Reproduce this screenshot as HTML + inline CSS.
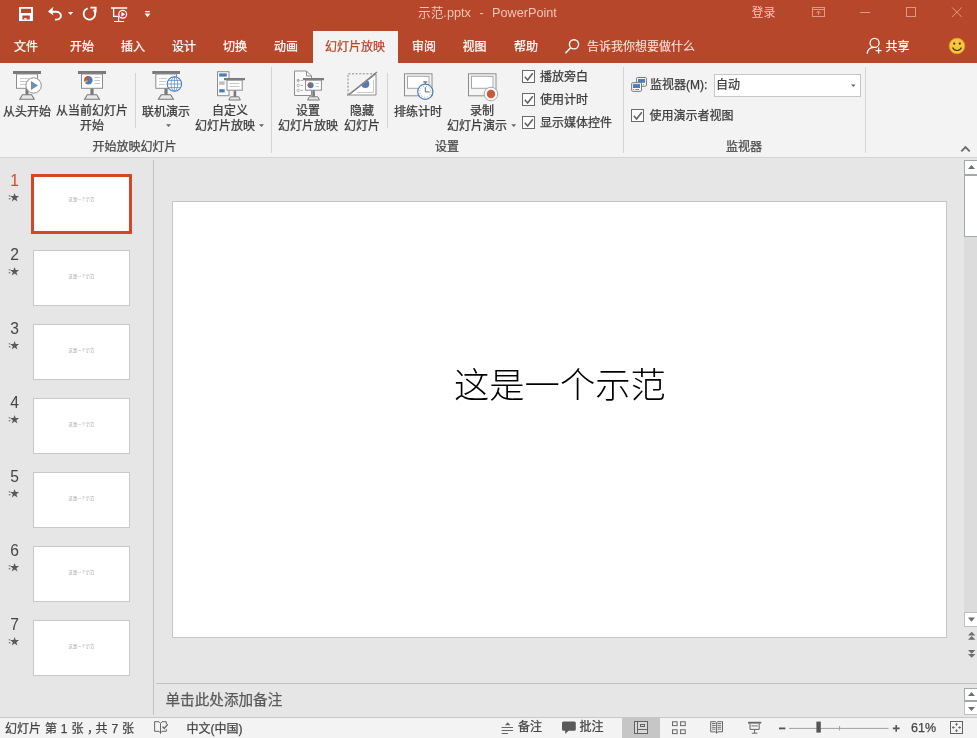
<!DOCTYPE html>
<html lang="zh-CN">
<head>
<meta charset="utf-8">
<title>示范.pptx - PowerPoint</title>
<style>
*{box-sizing:border-box;margin:0;padding:0}
html,body{width:977px;height:738px;overflow:hidden;background:#e6e6e6}
body{position:relative;font-family:"Liberation Sans","Noto Sans CJK SC",sans-serif;font-size:12px;color:#3a3a3a}
.abs{position:absolute}
svg{position:absolute;left:0;top:0;overflow:visible}
.t{position:absolute;white-space:nowrap;line-height:16px;-webkit-text-stroke:0.25px currentColor}
.c{text-align:center}
#titlebar{left:0;top:0;width:977px;height:63px;background:#b7472a}
#ribbon{left:0;top:63px;width:977px;height:95px;background:#f3f3f3;border-bottom:1px solid #d4d4d4}
.tab{color:#fff;font-size:12px;top:39px}
#activetab{left:313px;top:31px;width:85px;height:33px;background:#f3f3f3}
.sep{position:absolute;width:1px;background:#d4d4d4}
.glabel{color:#484848;top:139px}
.cb{position:absolute;width:13px;height:13px;border:1px solid #6a6a6a;background:#fdfdfd}
.cb svg{left:0;top:0}
#vdiv{left:153px;top:160px;width:1px;height:555px;background:#c0c0c0}
.thumb{position:absolute;left:33px;width:97px;height:56px;background:#fff;border:1px solid #c8c8c8}
.thumb.sel{left:31px;width:101px;height:60px;border:3px solid #d24726}
.num{position:absolute;left:10.3px;width:10px;font-size:15.6px;color:#444;line-height:16px}
.tt{position:absolute;left:0;right:0;top:50%;margin-top:-4.8px;text-align:center;font-size:4.3px;line-height:8px;color:#8a8a8a;font-weight:300}
.sel .tt{margin-top:-8.2px}
#slide{left:172px;top:201px;width:775px;height:437px;background:#fff;border:1px solid #c6c6c6}
#status{left:0;top:717px;width:977px;height:21px;background:#f3f3f3;border-top:1px solid #c8c8c8}
.st{color:#444;top:721px}
</style>
</head>
<body>
<div id="app" style="position:absolute;left:0;top:0;width:977px;height:738px;will-change:transform">
<div id="titlebar" class="abs"></div>
<div id="activetab" class="abs"></div>

<!-- title bar text -->
<div class="t" style="left:418px;top:5px;font-size:12.7px;color:#efc6b9;-webkit-text-stroke:0">示范.pptx</div>
<div class="t" style="left:479.5px;top:5px;font-size:12.7px;color:#efc6b9;-webkit-text-stroke:0">-</div>
<div class="t" style="left:492px;top:5px;font-size:12.7px;color:#efc6b9;-webkit-text-stroke:0">PowerPoint</div>
<div class="t" style="left:751.5px;top:4.5px;font-size:12px;color:#efc6b9;-webkit-text-stroke:0">登录</div>

<!-- tabs -->
<div class="t tab" style="left:14px">文件</div>
<div class="t tab" style="left:70px">开始</div>
<div class="t tab" style="left:121px">插入</div>
<div class="t tab" style="left:172px">设计</div>
<div class="t tab" style="left:223px">切换</div>
<div class="t tab" style="left:274px">动画</div>
<div class="t tab" style="left:325px;color:#b7472a">幻灯片放映</div>
<div class="t tab" style="left:412px">审阅</div>
<div class="t tab" style="left:462.5px">视图</div>
<div class="t tab" style="left:514px">帮助</div>
<div class="t tab" style="left:587px;color:#f9e2da;-webkit-text-stroke:0.1px">告诉我你想要做什么</div>
<div class="t tab" style="left:885.5px">共享</div>

<svg width="977" height="63" viewBox="0 0 977 63" fill="none" stroke="#fff" stroke-width="1.6">
  <!-- save -->
  <path fill-rule="evenodd" fill="#fff" stroke="none" d="M19 7 H33 V21 H19z M21 8.8 H31 V13 H21z M22.4 15.6 H29.8 V19.4 H22.4z"/>
  <rect x="24.3" y="18" width="2.2" height="1.6" fill="#fff" stroke="none"/>
  <!-- undo -->
  <path d="M49.6 11.8 H56 a4.9 3.9 0 0 1 0 7.8 H55" stroke-width="1.9"/>
  <path d="M53.4 6.8 L48 11.6 L53.4 15.4 L52.4 11.6z" fill="#fff" stroke="none"/>
  <path d="M68 12 h5.2 l-2.6 3.1z" fill="#fff" stroke="none"/>
  <!-- redo -->
  <path d="M87.6 8.3 A5.8 5.8 0 1 0 93.6 9.8" stroke-width="1.8"/>
  <path d="M90.4 7.6 H95.6 V12.6" stroke-width="1.9"/>
  <!-- slideshow from start -->
  <line x1="111" y1="8" x2="127.2" y2="8" stroke-width="1.5"/>
  <path d="M113.6 8 V16.4 H118.4" stroke-width="1.3"/>
  <path d="M118.6 16.6 V21.4 M114 21.5 H124.2" stroke-width="1.2"/>
  <circle cx="122.7" cy="14.3" r="3.9" stroke-width="1.2"/>
  <path d="M121.4 11.9 L125.2 14.3 L121.4 16.7z" fill="#fff" stroke="none"/>
  <!-- customize -->
  <rect x="145.2" y="11" width="4.6" height="1.2" fill="#fff" stroke="none"/>
  <path d="M144.6 13.6 h5.8 l-2.9 3.6z" fill="#fff" stroke="none"/>
  <!-- search -->
  <circle cx="574" cy="44.3" r="4.6" stroke-width="1.4"/>
  <line x1="570.6" y1="47.8" x2="565.4" y2="53.2" stroke-width="1.5"/>
  <!-- share -->
  <circle cx="874.6" cy="42.9" r="4.5" stroke-width="1.3"/>
  <path d="M867.2 53.6 C867.6 49.6 870.2 47.6 873.6 47.4" stroke-width="1.3"/>
  <path d="M875.6 50.6 H881.6 M878.6 47.6 V53.6" stroke-width="1.3"/>
  <!-- window controls -->
  <g stroke="#df9a86" stroke-width="1">
    <rect x="812.5" y="7.5" width="12" height="9"/>
    <line x1="812.5" y1="9.5" x2="824.5" y2="9.5"/>
    <path d="M818.5 15 V11.2 M816.5 13 L818.5 11 L820.5 13"/>
    <line x1="860" y1="12.5" x2="870" y2="12.5"/>
    <rect x="906.5" y="7.5" width="9" height="9"/>
    <path d="M952 7.3 L961.8 17.1 M961.8 7.3 L952 17.1"/>
  </g>
  <!-- smiley -->
  <circle cx="957" cy="46" r="7.8" fill="#f6c63c" stroke="#d9a520" stroke-width="0.8"/>
  <circle cx="954.2" cy="43.6" r="1.1" fill="#3a2a10" stroke="none"/>
  <circle cx="959.8" cy="43.6" r="1.1" fill="#3a2a10" stroke="none"/>
  <path d="M952.6 47.6 C954.4 51.4 959.6 51.4 961.4 47.6" stroke="#3a2a10" stroke-width="1.1"/>
</svg>
<div id="ribbon" class="abs"></div>

<!-- ribbon labels -->
<div class="t c" style="left:-3px;width:60px;top:104px">从头开始</div>
<div class="t c" style="left:52px;width:80px;top:104px;line-height:15px">从当前幻灯片<br>开始</div>
<div class="t c" style="left:136px;width:60px;top:104px">联机演示</div>
<div class="t c" style="left:190px;width:80px;top:104px;line-height:15px">自定义</div>
<div class="t" style="left:195px;top:119px;line-height:15px">幻灯片放映</div>
<div class="t c glabel" style="left:84.5px;width:100px">开始放映幻灯片</div>
<div class="sep" style="left:135px;top:73px;height:55px"></div>
<div class="sep" style="left:271px;top:67px;height:86px"></div>

<div class="t c" style="left:268px;width:80px;top:104px;line-height:15px">设置<br>幻灯片放映</div>
<div class="t c" style="left:337px;width:50px;top:104px;line-height:15px">隐藏<br>幻灯片</div>
<div class="sep" style="left:387px;top:73px;height:55px"></div>
<div class="t c" style="left:388px;width:60px;top:104px">排练计时</div>
<div class="t c" style="left:442px;width:80px;top:104px;line-height:15px">录制</div>
<div class="t" style="left:447px;top:119px;line-height:15px">幻灯片演示</div>
<div class="cb" style="left:522px;top:70px"></div>
<div class="cb" style="left:522px;top:93px"></div>
<div class="cb" style="left:522px;top:116px"></div>
<div class="t" style="left:540px;top:69px">播放旁白</div>
<div class="t" style="left:540px;top:92px">使用计时</div>
<div class="t" style="left:540px;top:115px">显示媒体控件</div>
<div class="t c glabel" style="left:417px;width:60px">设置</div>
<div class="sep" style="left:623px;top:67px;height:86px"></div>

<div class="t" style="left:650px;top:77px">监视器(M):</div>
<div class="abs" style="left:714px;top:74px;width:147px;height:23px;background:#fff;border:1px solid #c6c6c6"></div>
<div class="t" style="left:716px;top:77px">自动</div>
<div class="cb" style="left:631px;top:109px"></div>
<div class="t" style="left:649.5px;top:108px">使用演示者视图</div>
<div class="t c glabel" style="left:714px;width:60px">监视器</div>
<div class="sep" style="left:865px;top:67px;height:86px"></div>

<svg width="977" height="158" viewBox="0 0 977 158" fill="none">
  <!-- icon1: from beginning -->
  <rect x="13" y="71" width="28" height="3" fill="#7a7a7a"/>
  <rect x="16.5" y="74" width="21" height="14.3" fill="#fff" stroke="#8c8c8c"/>
  <path d="M20 78.5H29M20 81.5H27M20 84.5H26" stroke="#c8c8c8"/>
  <rect x="25.5" y="88.5" width="3" height="7" fill="#7a7a7a"/>
  <path d="M22.4 94.8 H31.6 L34.2 99.2 H19.8z" fill="#e8e8e8" stroke="#7a7a7a" stroke-width="1.1"/>
  <circle cx="33.6" cy="85.5" r="7.7" fill="#fff" stroke="#8c8c8c"/>
  <path d="M31 81 V90 L38 85.5z" fill="#6f8fb0"/>
  <!-- icon2: from current -->
  <rect x="78" y="71" width="28" height="3" fill="#7a7a7a"/>
  <rect x="81.5" y="74" width="21" height="14.3" fill="#fff" stroke="#8c8c8c"/>
  <circle cx="88.4" cy="80.2" r="4.2" fill="#4a7ebb"/>
  <path d="M88.4 80.2 V76 A4.2 4.2 0 0 0 84.3 81z" fill="#d2522a"/>
  <path d="M88.4 80.2 L84.3 81 A4.2 4.2 0 0 0 85.6 83.3z" fill="#e8b06a"/>
  <path d="M94.5 77.5H100M94.5 80.5H100M94.5 83.5H100" stroke="#c8c8c8"/>
  <rect x="90.4" y="88.5" width="3.2" height="7" fill="#7a7a7a"/>
  <path d="M87.4 94.8 H96.6 L99.4 99.2 H84.6z" fill="#e8e8e8" stroke="#7a7a7a" stroke-width="1.1"/>
  <!-- icon3: online -->
  <rect x="152.3" y="71" width="27.7" height="3" fill="#7a7a7a"/>
  <rect x="155.8" y="74" width="20.7" height="14.3" fill="#fff" stroke="#8c8c8c"/>
  <path d="M159 78.5H167M159 81.5H166M159 84.5H165" stroke="#c8c8c8"/>
  <rect x="164.4" y="88.5" width="3.2" height="7" fill="#7a7a7a"/>
  <path d="M161.2 94.8 H170.6 L173.4 99.2 H158.4z" fill="#e8e8e8" stroke="#7a7a7a" stroke-width="1.1"/>
  <circle cx="174.4" cy="84" r="7.2" fill="#fff" stroke="#4a7ebb" stroke-width="1.1"/>
  <ellipse cx="174.4" cy="84" rx="3.3" ry="7.2" stroke="#4a7ebb" stroke-width="0.7"/>
  <path d="M174.4 76.8V91.2M167.2 84H181.6M168.4 80.4H180.4M168.4 87.6H180.4" stroke="#4a7ebb" stroke-width="0.7"/>
  <path d="M166 124.2h5l-2.5 2.8z" fill="#666"/>
  <!-- icon4: custom show -->
  <rect x="217.5" y="71.7" width="11.5" height="24" fill="#fafafa" stroke="#8c8c8c"/>
  <rect x="219.2" y="73.4" width="7.6" height="3.2" fill="#4a7ebb"/>
  <rect x="219.2" y="81.4" width="5.5" height="3.4" fill="#bdbdbd"/>
  <rect x="219.2" y="89.2" width="5.5" height="3.2" fill="#4a7ebb"/>
  <rect x="224" y="78" width="21" height="2.2" fill="#7a7a7a"/>
  <rect x="227" y="80.2" width="15.2" height="10" fill="#fff" stroke="#8c8c8c"/>
  <path d="M229.5 83.5H239.5M229.5 86.5H239.5" stroke="#c8c8c8"/>
  <rect x="233.6" y="90.5" width="2.6" height="6.5" fill="#7a7a7a"/>
  <path d="M230.6 96.8 H238.8 L240.4 100 H228.8z" fill="#e8e8e8" stroke="#7a7a7a"/>
  <path d="M259 124.2h5l-2.5 2.8z" fill="#666"/>
  <!-- icon5: set up -->
  <path d="M294.5 71 H306.5 L311.5 76 V95.5 H294.5z" fill="#fafafa" stroke="#8c8c8c"/>
  <path d="M306.5 71 V76 H311.5" stroke="#8c8c8c"/>
  <circle cx="298.2" cy="80.4" r="1.2" fill="#bbb" stroke="#999" stroke-width="0.6"/>
  <circle cx="298.2" cy="85.4" r="1.2" stroke="#999" stroke-width="0.7"/>
  <circle cx="298.2" cy="90.4" r="1.2" stroke="#999" stroke-width="0.7"/>
  <path d="M300.6 80.4H303M300.6 85.4H303M300.6 90.4H303" stroke="#aaa"/>
  <rect x="303" y="78" width="21" height="2.2" fill="#7a7a7a"/>
  <rect x="305.6" y="80.2" width="15.8" height="10" fill="#fff" stroke="#8c8c8c"/>
  <circle cx="310.6" cy="85.2" r="3" fill="#4a7ebb"/>
  <path d="M310.6 85.2 V82.2 A3 3 0 0 0 307.7 86z" fill="#d2522a"/>
  <path d="M315.6 83.5H319M315.6 86.5H319" stroke="#c8c8c8"/>
  <rect x="312.3" y="90.5" width="2.6" height="6.5" fill="#7a7a7a"/>
  <path d="M309.2 96.8 H317.8 L319.4 100 H307.6z" fill="#e8e8e8" stroke="#7a7a7a"/>
  <!-- icon6: hide slide -->
  <clipPath id="tri"><path d="M378 72.4 V96 H348.4z"/></clipPath>
  <path d="M376 74 V95 H349z" fill="#fff" stroke="#8c8c8c"/>
  <path d="M373.5 79.5 V92.5 H357" stroke="#c4c4c4" stroke-width="0.9"/>
  <g clip-path="url(#tri)">
    <circle cx="365.3" cy="84" r="4" fill="#4a7ebb"/>
    <path d="M365.3 84 V80 A4 4 0 0 0 361.4 85z" fill="#d2522a"/>
  </g>
  <path d="M348 95 V73.8 H376" stroke="#8c8c8c" stroke-dasharray="2.1 1.5"/>
  <line x1="347.4" y1="95.6" x2="377" y2="72" stroke="#7a7a7a" stroke-width="1.2"/>
  <!-- icon7: rehearse -->
  <rect x="404.5" y="73.8" width="27.5" height="22" fill="#f5f5f5" stroke="#8c8c8c"/>
  <rect x="407.5" y="76.3" width="21.5" height="12" fill="#fff" stroke="#a6a6a6"/>
  <rect x="423.3" y="81.2" width="4" height="1.4" fill="#7a7a7a"/>
  <rect x="424.6" y="82" width="1.4" height="2.4" fill="#7a7a7a"/>
  <circle cx="425.3" cy="91.7" r="7.6" fill="#fff" stroke="#4a7ebb" stroke-width="1.2"/>
  <circle cx="425.3" cy="91.7" r="5.6" stroke="#8a8a8a" stroke-width="0.9" stroke-dasharray="0.9 2.03"/>
  <path d="M425.3 87.2 V91.9 H429.6" stroke="#666" stroke-width="1"/>
  <!-- icon8: record -->
  <rect x="468.5" y="73.8" width="27.5" height="22" fill="#f5f5f5" stroke="#8c8c8c"/>
  <rect x="471.5" y="76.3" width="21.5" height="12" fill="#fff" stroke="#a6a6a6"/>
  <circle cx="491" cy="94" r="6.8" fill="#fff" stroke="#a8a8a8"/>
  <circle cx="491" cy="94" r="4.2" fill="#c9583c"/>
  <path d="M511.2 124.2h5l-2.5 2.8z" fill="#666"/>
  <!-- checkmarks -->
  <g stroke="#606060" stroke-width="1.5">
    <path d="M524.8 76.8 L527.6 80.0 L532.8 73.2"/>
    <path d="M524.8 99.8 L527.6 103.0 L532.8 96.2"/>
    <path d="M524.8 122.8 L527.6 126.0 L532.8 119.2"/>
    <path d="M633.8 115.8 L636.6 119.0 L641.8 112.2"/>
  </g>
  <!-- monitor icon -->
  <rect x="636.6" y="77.5" width="9.8" height="8.7" rx="1" fill="#fff" stroke="#727272"/>
  <rect x="638" y="79" width="7" height="3.8" fill="#4a7eb8"/>
  <circle cx="643.4" cy="84.6" r="0.5" fill="#777"/>
  <rect x="631.7" y="82.7" width="9.8" height="8.6" rx="1" fill="#fff" stroke="#727272"/>
  <rect x="633" y="84.1" width="7" height="3.9" fill="#4a7eb8"/>
  <circle cx="633.6" cy="89.5" r="0.6" fill="#d2522a"/>
  <path d="M635.2 89.5 H639" stroke="#777" stroke-width="0.9"/>
  <!-- dropdown arrow -->
  <path d="M851 84.6h4.6l-2.3 2.5z" fill="#666"/>
  <!-- collapse ribbon -->
  <path d="M961.3 151.3 L965.5 147.1 L969.7 151.3" stroke="#6a6a6a" stroke-width="1.9"/>
</svg>
<!-- left panel -->
<div id="vdiv" class="abs"></div>
<div class="thumb sel" style="top:174px"><div class="tt">这是一个示范</div></div>
<div class="num" style="top:173px;color:#d24726">1</div>
<div class="thumb" style="top:250px"><div class="tt">这是一个示范</div></div>
<div class="num" style="top:247px;color:#444">2</div>
<div class="thumb" style="top:324px"><div class="tt">这是一个示范</div></div>
<div class="num" style="top:321px;color:#444">3</div>
<div class="thumb" style="top:398px"><div class="tt">这是一个示范</div></div>
<div class="num" style="top:395px;color:#444">4</div>
<div class="thumb" style="top:472px"><div class="tt">这是一个示范</div></div>
<div class="num" style="top:469px;color:#444">5</div>
<div class="thumb" style="top:546px"><div class="tt">这是一个示范</div></div>
<div class="num" style="top:543px;color:#444">6</div>
<div class="thumb" style="top:620px"><div class="tt">这是一个示范</div></div>
<div class="num" style="top:617px;color:#444">7</div>
<svg width="160" height="716" viewBox="0 0 160 716">
<polygon points="14.6,192.9 15.7,196.1 19.1,196.1 16.4,198.2 17.4,201.4 14.6,199.5 11.8,201.4 12.8,198.2 10.1,196.1 13.5,196.1" fill="#595959"/>
<path d="M8.8 195.8 h1.4 M8.8 198.8 h1.6" stroke="#595959" stroke-width="1"/>
<polygon points="14.6,266.9 15.7,270.1 19.1,270.1 16.4,272.2 17.4,275.4 14.6,273.5 11.8,275.4 12.8,272.2 10.1,270.1 13.5,270.1" fill="#595959"/>
<path d="M8.8 269.8 h1.4 M8.8 272.8 h1.6" stroke="#595959" stroke-width="1"/>
<polygon points="14.6,340.9 15.7,344.1 19.1,344.1 16.4,346.2 17.4,349.4 14.6,347.5 11.8,349.4 12.8,346.2 10.1,344.1 13.5,344.1" fill="#595959"/>
<path d="M8.8 343.8 h1.4 M8.8 346.8 h1.6" stroke="#595959" stroke-width="1"/>
<polygon points="14.6,414.9 15.7,418.1 19.1,418.1 16.4,420.2 17.4,423.4 14.6,421.5 11.8,423.4 12.8,420.2 10.1,418.1 13.5,418.1" fill="#595959"/>
<path d="M8.8 417.8 h1.4 M8.8 420.8 h1.6" stroke="#595959" stroke-width="1"/>
<polygon points="14.6,488.9 15.7,492.1 19.1,492.1 16.4,494.2 17.4,497.4 14.6,495.5 11.8,497.4 12.8,494.2 10.1,492.1 13.5,492.1" fill="#595959"/>
<path d="M8.8 491.8 h1.4 M8.8 494.8 h1.6" stroke="#595959" stroke-width="1"/>
<polygon points="14.6,562.9 15.7,566.1 19.1,566.1 16.4,568.2 17.4,571.4 14.6,569.5 11.8,571.4 12.8,568.2 10.1,566.1 13.5,566.1" fill="#595959"/>
<path d="M8.8 565.8 h1.4 M8.8 568.8 h1.6" stroke="#595959" stroke-width="1"/>
<polygon points="14.6,636.9 15.7,640.1 19.1,640.1 16.4,642.2 17.4,645.4 14.6,643.5 11.8,645.4 12.8,642.2 10.1,640.1 13.5,640.1" fill="#595959"/>
<path d="M8.8 639.8 h1.4 M8.8 642.8 h1.6" stroke="#595959" stroke-width="1"/>
</svg>
<!-- slide -->
<div id="slide" class="abs"></div>
<div class="t" style="left:454px;top:364px;font-size:35.3px;line-height:44px;font-weight:300;color:#000;-webkit-text-stroke:0">这是一个示范</div>

<!-- scrollbar -->
<div class="abs" style="left:964px;top:160px;width:13px;height:467px;background:#dcdcdc"></div>
<div class="abs" style="left:964px;top:160px;width:14px;height:15px;background:#fff;border:1px solid #a3a8ad"></div>
<div class="abs" style="left:964px;top:175px;width:14px;height:62px;background:#fff;border:1px solid #a3a8ad"></div>
<div class="abs" style="left:964px;top:612px;width:14px;height:15px;background:#fff;border:1px solid #c0c0c0"></div>
<!-- notes -->
<div class="abs" style="left:156px;top:683px;width:821px;height:1px;background:#c0c0c0"></div>
<div class="t" style="left:165.5px;top:691px;font-size:14.6px;line-height:18px;color:#595959">单击此处添加备注</div>
<div class="abs" style="left:964px;top:688px;width:14px;height:14px;background:#fff;border:1px solid #a3a8ad;border-bottom-width:2px"></div>
<div class="abs" style="left:964px;top:702px;width:14px;height:13px;background:#fff;border:1px solid #c0c0c0;border-top:0"></div>
<svg width="977" height="738" viewBox="0 0 977 738" fill="#6e6e6e">
  <path d="M968 169 h7 l-3.5 -4z"/>
  <path d="M968 617.6 h7 l-3.5 4.2z"/>
  <path d="M968 635.6 h7.4 l-3.7 -3.8z M968 639.8 h7.4 l-3.7 -3.8z"/>
  <path d="M968 650 h7.4 l-3.7 3.8z M968 654 h7.4 l-3.7 3.8z"/>
  <path d="M968 696 h7 l-3.5 -4z"/>
  <path d="M968 706.9 h7 l-3.5 4z"/>
</svg>
<!-- status -->
<div id="status" class="abs"></div>
<div class="abs" style="left:622px;top:718px;width:38px;height:20px;background:#c6c6c6"></div>
<div class="t st" style="left:5px;word-spacing:0.6px">幻灯片 第 1 张<span style="position:relative;left:3.5px">，</span>共 7 张</div>
<div class="t st" style="left:186.5px">中文(中国)</div>
<div class="t st" style="left:518px;top:719px">备注</div>
<div class="t st" style="left:579.5px;top:719px">批注</div>
<div class="t st" style="left:911px;top:720px;font-size:12.5px">61%</div>
<svg width="977" height="738" viewBox="0 0 977 738" fill="none" stroke="#666" stroke-width="1">
  <!-- spell/book icon -->
  <path d="M159 721.7 H154.6 V731.3 H159 L160.5 733 M159 721.7 L160.5 723.4 V733.8 M160.5 723.4 L162 721.7 H166.3 V724 M166.3 729 V731.3 H162 L160.5 733" stroke="#666"/>
  <path d="M162.5 726.5 L164.2 728.4 L167.8 724.3" stroke="#666" stroke-width="1.3"/>
  <!-- notes icon -->
  <path d="M505 725.2 h5.4 l-2.7 -3z" fill="#666" stroke="none"/>
  <path d="M501.6 727.5 H513 M501.6 730.5 H513 M501.6 733.5 H508" stroke-width="1.1"/>
  <!-- comment bubble -->
  <path d="M563.5 721.4 H574.3 Q575.8 721.4 575.8 722.9 V729.2 Q575.8 730.7 574.3 730.7 H568.6 L565.2 734 V730.7 H563.5 Q562 730.7 562 729.2 V722.9 Q562 721.4 563.5 721.4z" fill="#595959" stroke="none"/>
  <!-- normal view -->
  <rect x="634.5" y="721.5" width="13" height="12" fill="#d9d9d9" stroke="#626262"/>
  <path d="M637.5 721.5 V733.5 M637.5 729.5 H647.5" stroke="#626262"/>
  <rect x="640.5" y="724.5" width="4" height="2" fill="#d9d9d9" stroke="#626262"/>
  <!-- sorter -->
  <rect x="672.5" y="721.8" width="4.6" height="3.8"/>
  <rect x="680.6" y="721.8" width="4.6" height="3.8"/>
  <rect x="672.5" y="729.8" width="4.6" height="3.8"/>
  <rect x="680.6" y="729.8" width="4.6" height="3.8"/>
  <!-- reading view -->
  <path d="M716.6 722.8 L715.4 721.7 H710.7 V731.8 H715.4 L716.6 733 L717.8 731.8 H722.5 V721.7 H717.8 L716.6 722.8 V733.6" stroke-linejoin="miter"/>
  <path d="M712 723.5 H715.6 M712 725.4 H715.6 M712 727.3 H715.6 M712 729.2 H715.6 M717.6 723.5 H721.2 M717.6 725.4 H721.2 M717.6 727.3 H721.2 M717.6 729.2 H721.2" stroke-width="0.9"/>
  <!-- slideshow -->
  <rect x="748" y="721.8" width="13.2" height="1.8" fill="#666" stroke="none"/>
  <path d="M750 723.6 V729.4 H759.2 V723.6"/>
  <path d="M754.6 729.4 V733 M751.8 733.2 H757.4"/>
  <path d="M751.4 725.9 H757.8" stroke-width="0.9"/>
  <!-- zoom slider -->
  <path d="M779 728.4 H785.4" stroke="#555" stroke-width="1.8"/>
  <path d="M789 728.4 H888.6" stroke="#a0a0a0"/>
  <path d="M839.6 726 V730.6" stroke="#a0a0a0"/>
  <rect x="816.4" y="721.6" width="4.4" height="11" fill="#555" stroke="none"/>
  <path d="M892.8 728.4 H899.6 M896.2 725 V731.8" stroke="#555" stroke-width="1.6"/>
  <!-- fit -->
  <rect x="950.5" y="721.5" width="12" height="12" stroke="#626262"/>
  <path d="M956.5 723 V725.8 M955.2 724.3 H957.8 M956.5 729.2 V732 M955.2 730.7 H957.8 M952 727.5 H954.8 M953.3 726.2 V728.8 M958.2 727.5 H961 M959.7 726.2 V728.8" stroke="#626262" stroke-width="0.9"/>
</svg>

</div>
</body>
</html>
